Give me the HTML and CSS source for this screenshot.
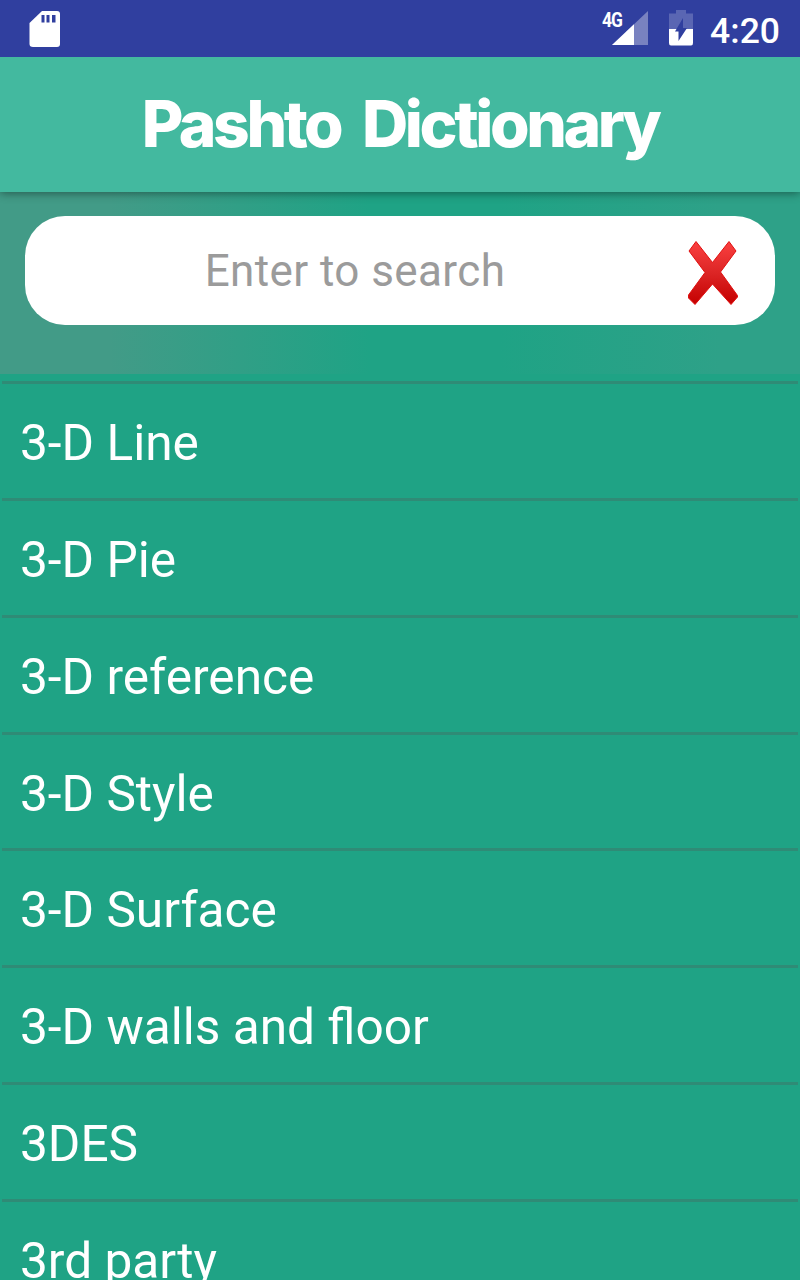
FILE: index.html
```html
<!DOCTYPE html>
<html lang="en">
<head>
    <meta charset="UTF-8">
    <meta name="viewport" content="width=device-width, initial-scale=1.0">
    <title>Pashto Dictionary</title>
    <link rel="stylesheet" href="styles.css">
</head>
<body>

<div class="statusbar">
    <svg class="sdcard" width="32" height="38" viewBox="0 0 32 38">
        <path d="M13 0H28Q31 0 31 3V33Q31 36 28 36H4Q0.500 36 0.500 33V12Z" fill="#fff"/>
        <path d="M12.500 4H15.500V11.500H12.500ZM17.500 4H20.500V11.500H17.500ZM23 4H26.500V11.500H23Z" fill="#303f9f"/>
    </svg>
    <div class="network">
        <span>4G</span>
        <svg width="37" height="34" viewBox="0 0 37 34">
            <path d="M36 0V34H0Z" fill="#7982c0"/>
            <path d="M22 13.200V34H0Z" fill="#fff"/>
        </svg>
    </div>
    <svg class="battery" width="24" height="36" viewBox="0 0 24 36">
        <path d="M7 0H17V3.500H24V19H0V3.500H7Z" fill="#5a66b3"/>
        <path d="M0 19H24V33Q24 35.500 22 35.500H2Q0 35.500 0 33Z" fill="#fff"/>
        <path d="M14 8V18H18L9.500 31V21.500H6Z" fill="#303f9f"/>
    </svg>
    <div class="clock">4:20</div>
</div>

<div class="titlebar">
    <h1>Pashto Dictionary</h1>
</div>

<div class="search">
    <div class="search-box">
        <input type="text" placeholder="Enter to search">
        <svg class="clear" width="52" height="66" viewBox="0 0 52 66">
            <defs>
                <linearGradient id="red" x1="0" y1="0" x2="0" y2="1">
                    <stop offset="0" stop-color="#fb4040"/>
                    <stop offset="0.5" stop-color="#dc2525"/>
                    <stop offset="1" stop-color="#c50000"/>
                </linearGradient>
            </defs>
            <path d="M9 1.500L25.500 22.500L42 1.500L49 11L33.500 32L50.500 55.500V57L44 64.500L25.500 44L8 64.500L1.500 58V55L18 32.500L2 11Z" fill="url(#red)" stroke="#e01010" stroke-width="1" stroke-linejoin="round"/>
        </svg>
    </div>
</div>

<div class="words">
    <div class="word">3-D Line</div>
    <div class="word">3-D Pie</div>
    <div class="word">3-D reference</div>
    <div class="word">3-D Style</div>
    <div class="word">3-D Surface</div>
    <div class="word">3-D walls and floor</div>
    <div class="word">3DES</div>
    <div class="word">3rd party</div>
</div>

</body>
</html>
```
FILE: styles.css
```css
body {
    font-family: Roboto, sans-serif;
    background-color: #1fa385;
    color: #fff;
    margin: 0;
    height: 1280px;
    overflow: hidden;
    display: flex;
    flex-direction: column;
}
.statusbar {
    background-color: #303f9f;
    height: 57px;
    flex-shrink: 0;
    box-sizing: border-box;
    padding: 0 20px 0 29px;
    display: flex;
    align-items: flex-start;
    z-index: 2;
}
.sdcard {
    margin-top: 11px;
    margin-right: auto;
}
.network {
    display: flex;
    align-items: flex-start;
    padding-top: 11px;
}
.network span {
    font-size: 19px;
    font-weight: 700;
    line-height: 19px;
    letter-spacing: -1px;
    margin-right: -12px;
    transform: scale(0.92, 1.05);
    transform-origin: 0 50%;
    z-index: 1;
}
.battery {
    margin: 10px 17px 0 20px;
}
.clock {
    font-size: 35.5px;
    font-weight: 500;
    line-height: 62px;
}
.titlebar {
    background-color: #43b99f;
    height: 135px;
    flex-shrink: 0;
    display: flex;
    justify-content: center;
    box-shadow: 0 1px 9px rgba(0,0,0,0.45);
    z-index: 1;
}
.titlebar h1 {
    font-family: Inter, sans-serif;
    font-size: 64px;
    font-weight: 800;
    line-height: 134px;
    letter-spacing: -3.4px;
    word-spacing: 11px;
    margin: 0;
    white-space: nowrap;
}
.search {
    background: linear-gradient(to right, #429b87 0, #429b87 110px, #1fa385 370px, #1fa385 500px, #2ea188 720px, #2ea188 100%);
    height: 182px;
    flex-shrink: 0;
    box-sizing: border-box;
    padding: 24px 25px 0;
}
.search-box {
    background-color: #fff;
    border-radius: 40px;
    height: 109px;
    display: flex;
    align-items: center;
    padding: 0 36px 0 30px;
}
.search-box input {
    flex: 1;
    min-width: 0;
    border: 0;
    padding: 0 32px 0 0;
    background: none;
    outline: none;
    font-family: Roboto, sans-serif;
    font-size: 44px;
    letter-spacing: 0.4px;
    text-align: center;
}
.search-box input::placeholder {
    color: #9b9b9b;
}
.clear {
    margin-top: 4px;
}
.words {
    padding: 7px 2px 0;
}
.word {
    height: 116.86px;
    box-sizing: border-box;
    border-top: 3px solid #2f8b76;
    padding-left: 18px;
    font-size: 49.6px;
    line-height: 118px;
    white-space: nowrap;
}
```
